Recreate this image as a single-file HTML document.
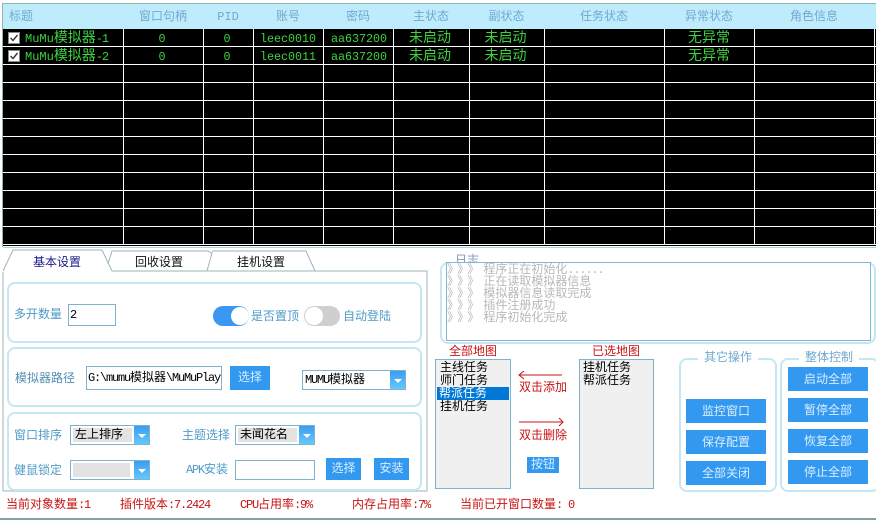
<!DOCTYPE html>
<html lang="zh"><head><meta charset="utf-8"><title>MuMu</title>
<style>
html,body{margin:0;padding:0;background:#fff}
#p{position:relative;width:876px;height:520px;overflow:hidden;background:#fff;font-family:"Liberation Mono","WenQuanYi Zen Hei","Noto Sans CJK SC",monospace;font-size:12px}
#p div{position:absolute;box-sizing:border-box;white-space:nowrap}
.h{top:5px;height:24px;line-height:24px;color:#6fa9d0;text-align:center;font-size:12px}
.v{top:29px;width:1px;height:216px;background:#fff}
.l{left:3px;width:873px;height:1px;background:#fff}
.g{color:#3fd23f;text-align:center;height:18px;line-height:18px;font-size:11.7px}
.b{font-size:14px}
.box{border:2px solid #c5e6f3;border-radius:8px;background:#fff}
.lb{color:#4f9bc9;font-size:12px;line-height:16px}
.btn{background:#3399f0;color:#d8eeff;text-align:center;font-size:12px}
.inp{border:1px solid #7fb2cf;background:#fff;color:#000}
.cb{border:1px solid #7fb2cf;background:#fff;color:#000;font-size:12px}
.cbi{background:#e3e3e3;left:2px;top:2px;bottom:2px}
.ar{right:0;top:0;bottom:0;width:15px;background:linear-gradient(#3a9df2,#66c8fb)}
.ar:after{content:"";position:absolute;left:4px;top:8px;border:4px solid transparent;border-top:4px solid #fff;border-bottom:0}
.red{color:#c81414;font-size:12px;line-height:14px}
.li{font-size:12px;line-height:13px;color:#000}
.s{font-size:12px;letter-spacing:-1.2px}
.q{letter-spacing:4.1px}
.tab{font-size:12px;line-height:16px;font-family:"WenQuanYi Zen Hei","Noto Sans CJK SC",sans-serif}
</style></head><body><div id="p">
<div style="left:2px;top:3px;width:874px;height:1px;background:#8fb5ad"></div>
<div style="left:2px;top:3px;width:1px;height:244px;background:#8fb5ad"></div>
<div style="left:3px;top:4px;width:873px;height:25px;background:#bfecfd"></div>
<div style="left:3px;top:29px;width:873px;height:217px;background:#000"></div>
<div style="left:3px;top:247px;width:873px;height:1px;background:#a8d5d5"></div>

<div class="h" style="left:9px;text-align:left">标题</div>
<div class="h" style="left:123px;width:80px">窗口句柄</div>
<div class="h" style="left:203px;width:50px">PID</div>
<div class="h" style="left:253px;width:70px">账号</div>
<div class="h" style="left:323px;width:70px">密码</div>
<div class="h" style="left:393px;width:76px">主状态</div>
<div class="h" style="left:469px;width:75px">副状态</div>
<div class="h" style="left:544px;width:120px">任务状态</div>
<div class="h" style="left:664px;width:90px">异常状态</div>
<div class="h" style="left:754px;width:120px">角色信息</div>

<div class="v" style="left:123px"></div><div class="v" style="left:203px"></div><div class="v" style="left:253px"></div><div class="v" style="left:323px"></div><div class="v" style="left:393px"></div><div class="v" style="left:469px"></div><div class="v" style="left:544px"></div><div class="v" style="left:664px"></div><div class="v" style="left:754px"></div><div class="v" style="left:874px"></div>
<div class="l" style="top:46px"></div><div class="l" style="top:64px"></div><div class="l" style="top:82px"></div><div class="l" style="top:100px"></div><div class="l" style="top:118px"></div><div class="l" style="top:136px"></div><div class="l" style="top:154px"></div><div class="l" style="top:172px"></div><div class="l" style="top:190px"></div><div class="l" style="top:208px"></div><div class="l" style="top:226px"></div><div class="l" style="top:244px"></div>

<svg style="position:absolute;left:8px;top:32px" width="12" height="30"><rect x=".5" y=".5" width="11" height="11" fill="#fff" stroke="#888"/><path d="M2.5 6l2.5 2.5L9.5 3" fill="none" stroke="#333" stroke-width="1.4"/><rect x=".5" y="18.5" width="11" height="11" fill="#fff" stroke="#888"/><path d="M2.5 24l2.5 2.5L9.5 21" fill="none" stroke="#333" stroke-width="1.4"/></svg>

<div class="g b" style="left:25px;top:30px;font-size:14px"><span style="font-size:12px">MuMu</span>模拟器<span class="s">-1</span></div>
<div class="g" style="left:122px;width:80px;top:30px">0</div><div class="g" style="left:202px;width:50px;top:30px">0</div>
<div class="g" style="left:253px;width:70px;top:30px">leec0010</div><div class="g" style="left:324px;width:70px;top:30px">aa637200</div>
<div class="g b" style="left:392px;width:76px;top:30px">未启动</div><div class="g b" style="left:468px;width:75px;top:30px">未启动</div><div class="g b" style="left:664px;width:90px;top:30px">无异常</div>
<div class="g b" style="left:25px;top:48px;font-size:14px"><span style="font-size:12px">MuMu</span>模拟器<span class="s">-2</span></div>
<div class="g" style="left:122px;width:80px;top:48px">0</div><div class="g" style="left:202px;width:50px;top:48px">0</div>
<div class="g" style="left:253px;width:70px;top:48px">leec0011</div><div class="g" style="left:324px;width:70px;top:48px">aa637200</div>
<div class="g b" style="left:392px;width:76px;top:48px">未启动</div><div class="g b" style="left:468px;width:75px;top:48px">未启动</div><div class="g b" style="left:664px;width:90px;top:48px">无异常</div>

<!-- tabs -->
<svg style="position:absolute;left:0;top:248px" width="430" height="245"><path d="M3 24V243M3 23L13 2H102L112 23M108 16L112 3H208L212 5L207 23M212 3H306L315 23M112 23H427V243H3" fill="none" stroke="#9db3b8"/><path d="M4 23H111" stroke="#fff" stroke-width="2"/></svg>
<div class="tab" style="left:33px;top:254px;color:#1a1a8c">基本设置</div>
<div class="tab" style="left:135px;top:254px;color:#111">回收设置</div>
<div class="tab" style="left:237px;top:254px;color:#111">挂机设置</div>

<div class="box" style="left:7px;top:282px;width:415px;height:61px"></div>
<div class="lb" style="left:14px;top:307px">多开数量</div>
<div class="inp" style="left:68px;top:304px;width:48px;height:22px;line-height:20px;padding-left:1px">2</div>
<div style="left:213px;top:306px;width:36px;height:20px;border-radius:10px;background:#3a97f2"></div>
<div style="left:231px;top:307px;width:18px;height:18px;border-radius:9px;background:#fff"></div>
<div class="lb" style="left:251px;top:309px">是否置顶</div>
<div style="left:304px;top:306px;width:36px;height:20px;border-radius:10px;background:#cfcfcf"></div>
<div style="left:305px;top:307px;width:18px;height:18px;border-radius:9px;background:#fff"></div>
<div class="lb" style="left:343px;top:309px">自动登陆</div>

<div class="box" style="left:7px;top:347px;width:415px;height:60px"></div>
<div class="lb" style="left:15px;top:371px;color:#4f8fb0">模拟器路径</div>
<div class="inp" style="left:86px;top:366px;width:136px;height:24px;line-height:22px;padding-left:1px;overflow:hidden;font-size:12px"><span class="s">G:\mumu</span>模拟器<span class="s">\MuMuPlay</span></div>
<div class="btn" style="left:230px;top:366px;width:40px;height:24px;line-height:24px">选择</div>
<div class="cb" style="left:302px;top:370px;width:104px;height:20px;line-height:18px"><span class="s" style="padding-left:2px">MUMU</span>模拟器<div class="ar"></div></div>

<div class="box" style="left:7px;top:412px;width:415px;height:79px"></div>
<div class="lb" style="left:14px;top:428px">窗口排序</div>
<div class="cb" style="left:70px;top:425px;width:80px;height:20px;line-height:18px"><div class="cbi" style="width:59px;padding-left:2px;line-height:14px">左上排序</div><div class="ar"></div></div>
<div class="lb" style="left:182px;top:428px">主题选择</div>
<div class="cb" style="left:235px;top:425px;width:80px;height:20px"><div class="cbi" style="width:59px;padding-left:2px;line-height:14px">未闻花名</div><div class="ar"></div></div>
<div class="lb" style="left:14px;top:463px">健鼠锁定</div>
<div class="cb" style="left:70px;top:460px;width:80px;height:20px"><div class="cbi" style="width:57px"></div><div class="ar"></div></div>
<div class="lb" style="left:186px;top:462px"><span class="s">APK</span>安装</div>
<div class="inp" style="left:235px;top:460px;width:80px;height:20px"></div>
<div class="btn" style="left:326px;top:458px;width:35px;height:22px;line-height:23px">选择</div>
<div class="btn" style="left:374px;top:458px;width:35px;height:22px;line-height:23px">安装</div>

<!-- status -->
<div class="red" style="left:6px;top:498px">当前对象数量<span class="s">:1</span></div>
<div class="red" style="left:120px;top:498px">插件版本<span class="s">:7.2424</span></div>
<div class="red" style="left:240px;top:498px"><span class="s">CPU</span>占用率<span class="s">:9%</span></div>
<div class="red" style="left:352px;top:498px">内存占用率<span class="s">:7%</span></div>
<div class="red" style="left:460px;top:498px">当前已开窗口数量<span class="s">: 0</span></div>
<div style="left:0;top:518px;width:876px;height:2px;background:#7fa3a3"></div>

<!-- log -->
<div style="left:455px;top:254px;color:#7a9cc0;line-height:14px;font-size:12px">日志</div>
<div class="box" style="left:440px;top:262px;width:436px;height:82px"></div>
<div style="left:446px;top:262px;width:425px;height:79px;border:1px solid #85b5d0;background:#fff;color:#b8b8b8;font-size:12px;line-height:12px;padding-top:1px;white-space:pre"><span class="q">》》》</span>程序正在初始化<span class="s">......</span>
<span class="q">》》》</span>正在读取模拟器信息
<span class="q">》》》</span>模拟器信息读取完成
<span class="q">》》》</span>插件注册成功
<span class="q">》》》</span>程序初始化完成</div>

<!-- lists -->
<div class="red" style="left:449px;top:345px">全部地图</div>
<div class="inp" style="left:435px;top:359px;width:76px;height:130px;background:#f0f0f0"></div>
<div style="left:437px;top:387px;width:72px;height:13px;background:#0078d7"></div>
<div class="li" style="left:440px;top:362px">主线任务</div>
<div class="li" style="left:440px;top:375px">师门任务</div>
<div class="li" style="left:439px;top:388px;color:#fff">帮派任务</div>
<div class="li" style="left:440px;top:401px">挂机任务</div>
<div class="red" style="left:592px;top:345px">已选地图</div>
<div class="inp" style="left:579px;top:359px;width:75px;height:130px;background:#f0f0f0"></div>
<div class="li" style="left:583px;top:362px">挂机任务</div>
<div class="li" style="left:583px;top:375px">帮派任务</div>
<svg style="position:absolute;left:518px;top:370px" width="48" height="60"><path d="M6 1L1 5L6 9M1 5H44" fill="none" stroke="#c81414"/><path d="M1 52H45M41 48L45 52L41 56" fill="none" stroke="#c81414"/></svg>
<div class="red" style="left:519px;top:381px">双击添加</div>
<div class="red" style="left:519px;top:429px">双击删除</div>
<div class="btn" style="left:527px;top:457px;width:32px;height:16px;line-height:17px">按钮</div>

<!-- other ops -->
<div class="box" style="left:679px;top:358px;width:98px;height:134px"></div>
<div style="left:698px;top:350px;width:60px;height:16px;line-height:16px;background:#fff;color:#6fa9d0;text-align:center">其它操作</div>
<div class="btn" style="left:686px;top:399px;width:80px;height:24px;line-height:26px">监控窗口</div>
<div class="btn" style="left:686px;top:430px;width:80px;height:24px;line-height:26px">保存配置</div>
<div class="btn" style="left:686px;top:461px;width:80px;height:24px;line-height:26px">全部关闭</div>
<div class="box" style="left:780px;top:358px;width:100px;height:134px"></div>
<div style="left:799px;top:350px;width:60px;height:16px;line-height:16px;background:#fff;color:#6fa9d0;text-align:center">整体控制</div>
<div class="btn" style="left:788px;top:367px;width:80px;height:24px;line-height:26px">启动全部</div>
<div class="btn" style="left:788px;top:398px;width:80px;height:24px;line-height:26px">暂停全部</div>
<div class="btn" style="left:788px;top:429px;width:80px;height:24px;line-height:26px">恢复全部</div>
<div class="btn" style="left:788px;top:460px;width:80px;height:24px;line-height:26px">停止全部</div>
</div></body></html>
